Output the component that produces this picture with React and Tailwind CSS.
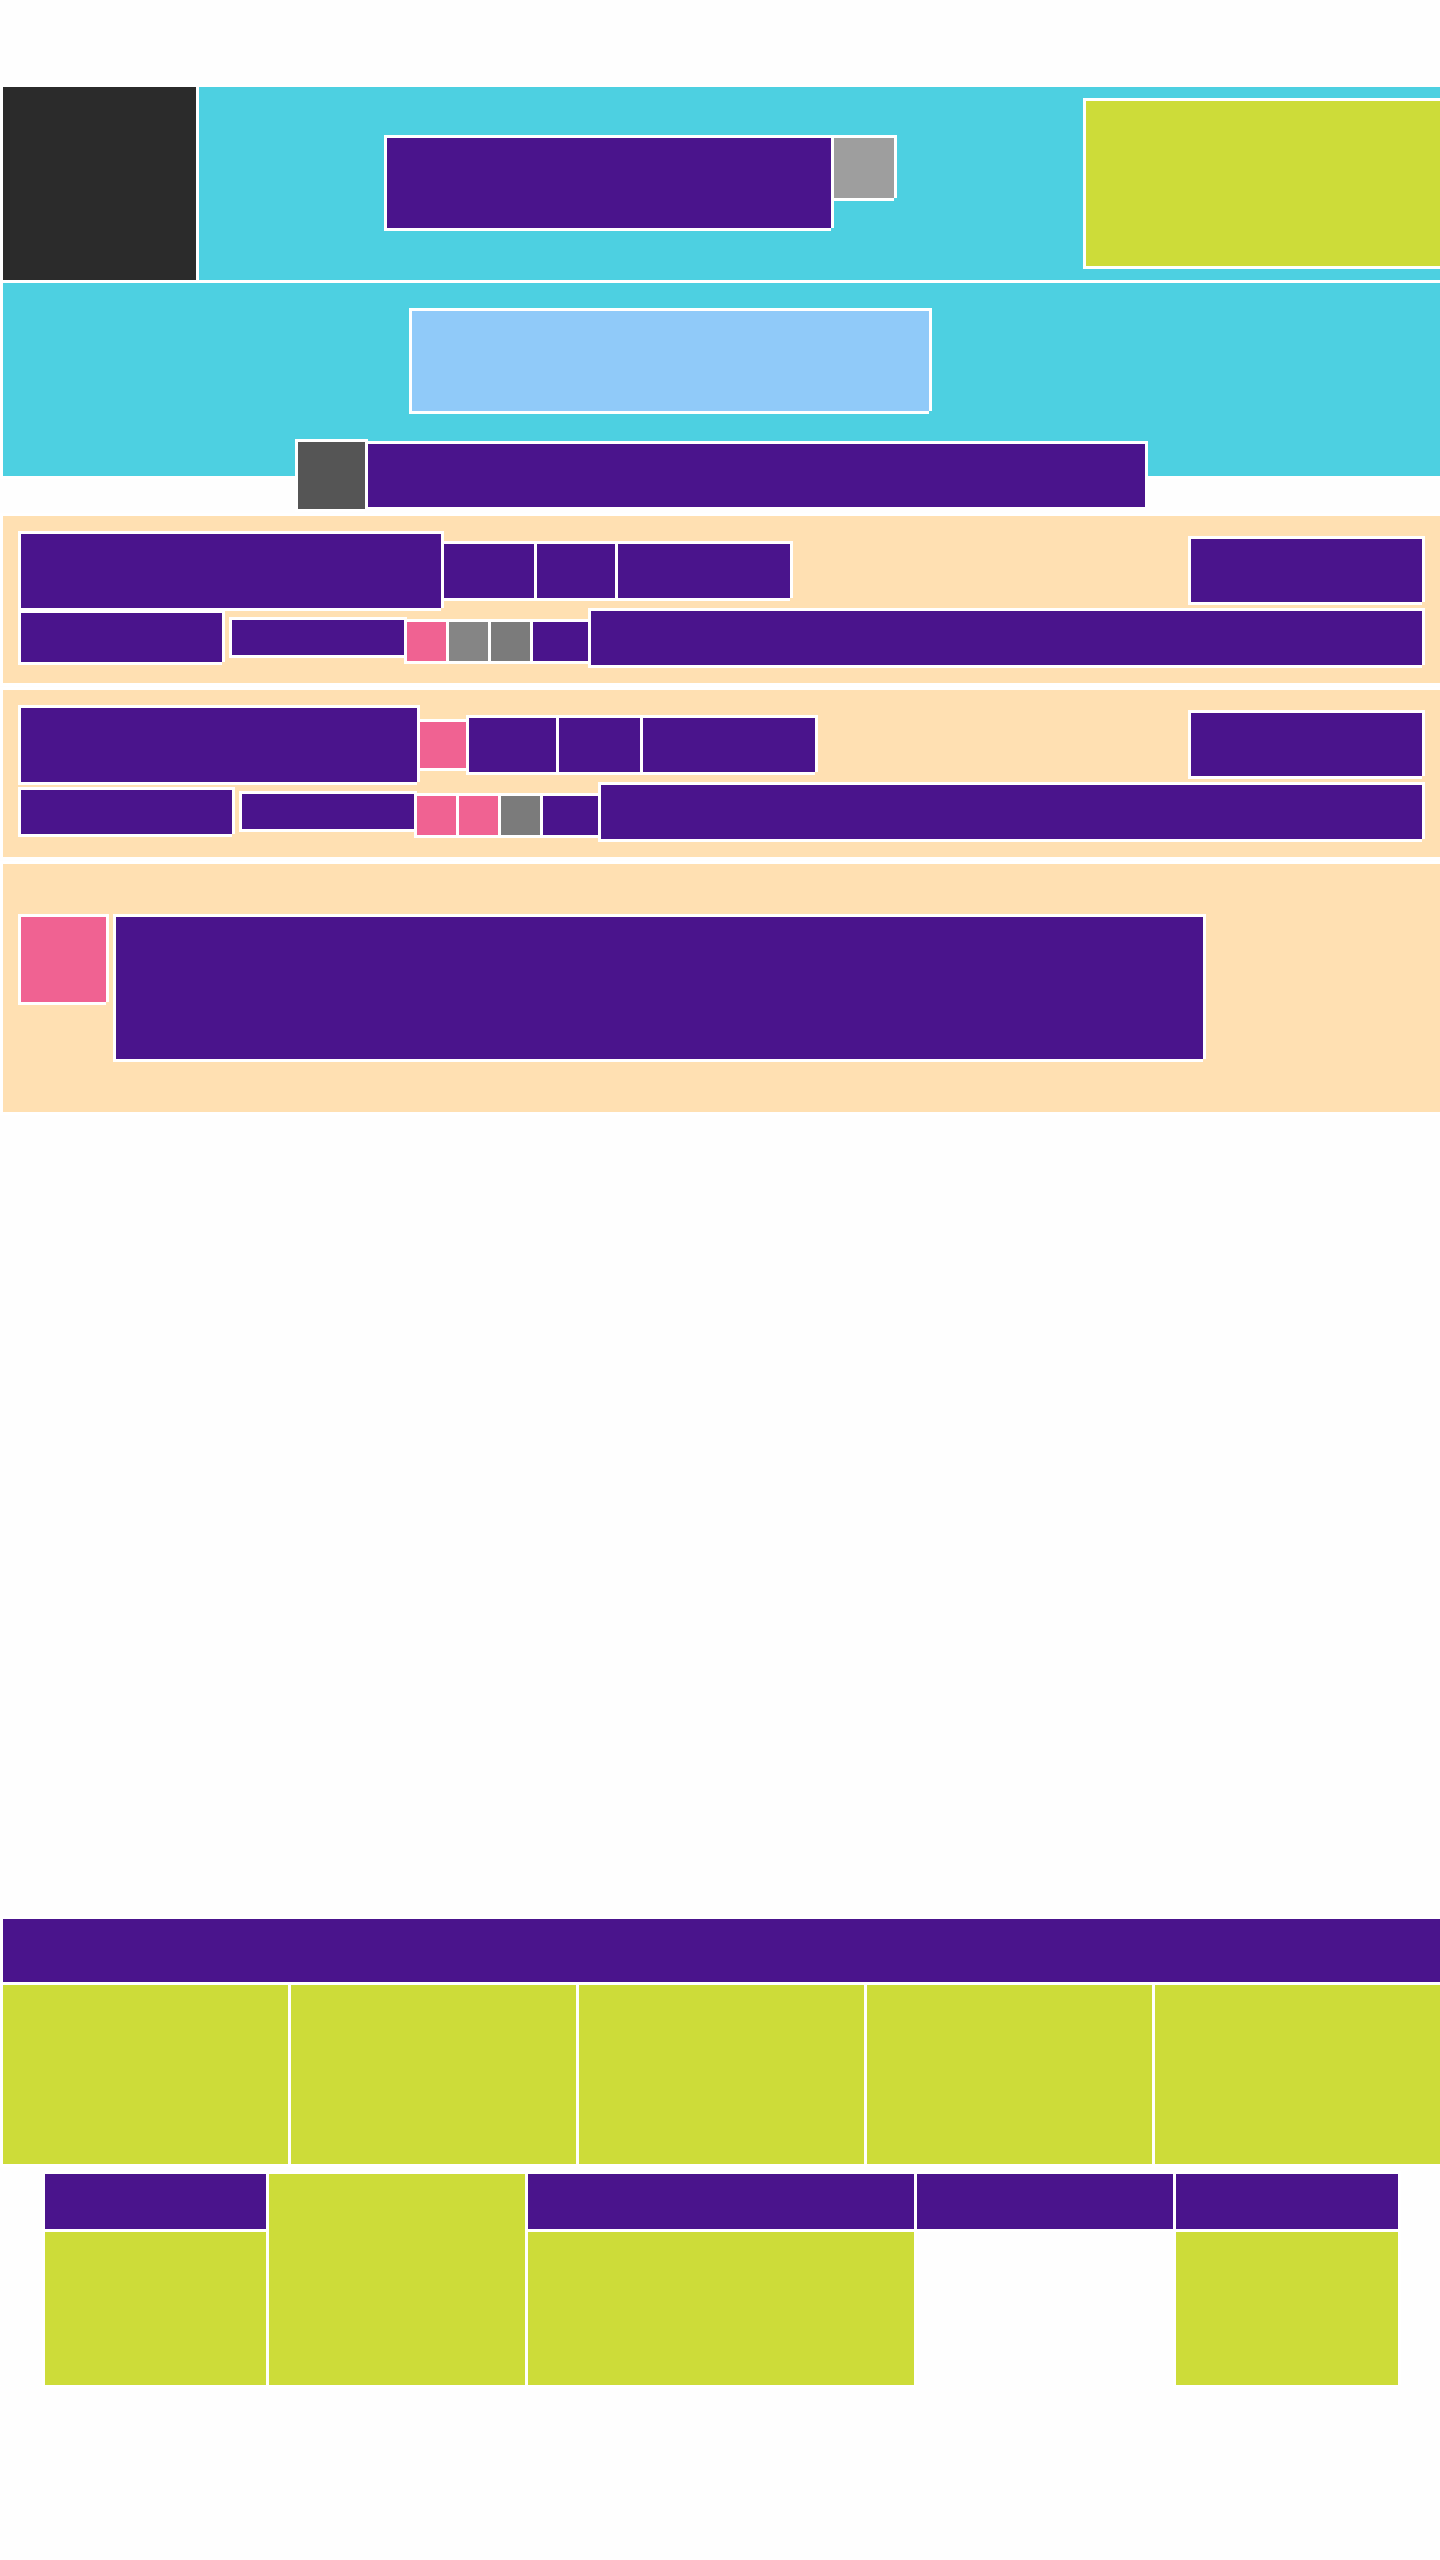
import React from "react";

// every block has a 3px white edge: top/left as border, right/bottom as shadow (leaves the corner notch)
function Box({ className = "", children }) {
  return (
    <div
      className={`shrink-0 border-t-3 border-l-3 border-white shadow-[3px_0_0_#ffffff,0_3px_0_#ffffff] ${className}`}
    >
      {children}
    </div>
  );
}

const PURPLE = "bg-[#4a148c]";
const PINK = "bg-[#f06292]";
const LIME = "bg-[#cddc39]";

function PostRow({ headW, badge, nav, sub, right }) {
  return (
    <>
      <div className="flex items-start pl-[15px] pr-[18px] pt-[15px]">
        <Box className={`${headW} h-[77px] ${PURPLE}`} />
        {badge && <Box className={`w-[49px] h-[49px] mt-[14px] ${PINK}`} />}
        <div className="flex mt-[10px]">
          {nav.map((w, i) => (
            <Box key={i} className={`${w} h-[57px] ${PURPLE}`} />
          ))}
        </div>
        <Box className={`w-[234px] h-[66px] ml-auto mt-[5px] ${PURPLE}`} />
      </div>
      <div className="flex items-start pl-[15px] pr-[18px]">
        <Box className={`${sub.w} ${sub.h} ${sub.mt} ${PURPLE}`} />
        <Box className={`w-[175px] h-[38px] ml-[7px] mt-[9px] ${PURPLE}`} />
        {right.map((c, i) => (
          <Box key={i} className={`w-[42px] h-[42px] mt-[11px] ${c}`} />
        ))}
        <Box className={`w-[58px] h-[42px] mt-[11px] ${PURPLE}`} />
        <Box className={`flex-1 h-[57px] ${PURPLE}`} />
      </div>
    </>
  );
}

export default function App() {
  return (
    <div className="min-h-[2560px] bg-[#fefefe] pt-[84px] overflow-hidden">
      {/* top header */}
      <div className="flex">
        <Box className="w-[196px] h-[196px] bg-[#2b2b2b]" />
        <Box className="flex-1 h-[196px] bg-[#4dd0e1]">
          <div className="flex items-start">
            <Box className={`w-[447px] h-[93px] ml-[185px] mt-[48px] ${PURPLE}`} />
            <Box className="w-[63px] h-[63px] mt-[48px] bg-[#9e9e9e]" />
            <Box className={`w-[357px] h-[168px] ml-auto mt-[11px] ${LIME}`} />
          </div>
        </Box>
      </div>

      {/* banner */}
      <Box className="w-full h-[196px] bg-[#4dd0e1]">
        <Box className="w-[520px] h-[103px] ml-[406px] mt-[25px] bg-[#90caf9]" />
        <div className="flex items-center ml-[292px] mt-[28px]">
          <Box className="w-[70px] h-[70px] bg-[#555555]" />
          <Box className={`w-[780px] h-[66px] ${PURPLE}`} />
        </div>
      </Box>

      {/* posts */}
      <Box className="w-full h-[170px] mt-[37px] bg-[#ffe0b2]">
        <PostRow
          headW="w-[423px]"
          nav={["w-[93px]", "w-[81px]", "w-[175px]"]}
          sub={{ w: "w-[204px]", h: "h-[52px]", mt: "mt-[2px]" }}
          right={[PINK, "bg-[#858585]", "bg-[#7b7b7b]"]}
        />
      </Box>
      <Box className="w-full h-[170px] mt-[4px] bg-[#ffe0b2]">
        <PostRow
          headW="w-[399px]"
          badge
          nav={["w-[90px]", "w-[84px]", "w-[175px]"]}
          sub={{ w: "w-[214px]", h: "h-[47px]", mt: "mt-[5px]" }}
          right={[PINK, PINK, "bg-[#7b7b7b]"]}
        />
      </Box>
      <Box className="w-full h-[251px] mt-[4px] bg-[#ffe0b2]">
        <div className="flex items-start pl-[15px] pt-[50px]">
          <Box className={`w-[88px] h-[88px] ${PINK}`} />
          <Box className={`w-[1090px] h-[145px] ml-[7px] ${PURPLE}`} />
        </div>
      </Box>

      {/* footer */}
      <Box className={`w-full h-[66px] mt-[804px] ${PURPLE}`} />
      <div className="grid grid-cols-5">
        {[0, 1, 2, 3, 4].map((i) => (
          <Box key={i} className={`h-[182px] ${LIME}`} />
        ))}
      </div>
      <div className="flex justify-center items-start mt-[7px]">
        <div className="w-[224px]">
          <Box className={`h-[58px] ${PURPLE}`} />
          <Box className={`h-[156px] ${LIME}`} />
        </div>
        <Box className={`w-[259px] h-[214px] ${LIME}`} />
        <div className="w-[389px]">
          <Box className={`h-[58px] ${PURPLE}`} />
          <Box className={`h-[156px] ${LIME}`} />
        </div>
        <Box className={`w-[259px] h-[58px] ${PURPLE}`} />
        <div className="w-[225px]">
          <Box className={`h-[58px] ${PURPLE}`} />
          <Box className={`h-[156px] ${LIME}`} />
        </div>
      </div>
    </div>
  );
}
